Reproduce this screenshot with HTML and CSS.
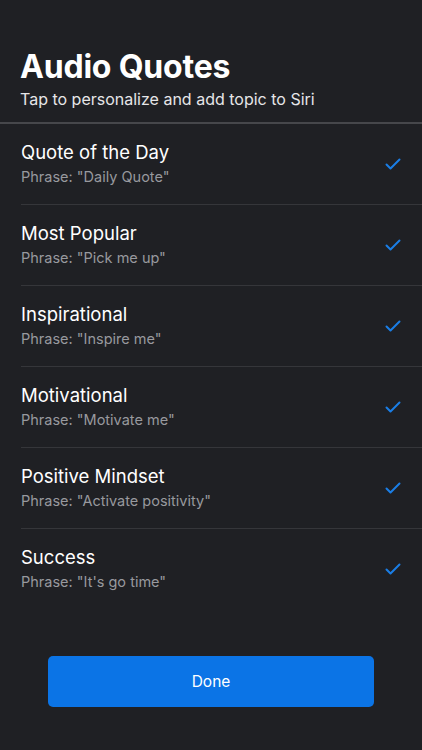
FILE: index.html
```html
<!DOCTYPE html>
<html lang="en">
<head>
    <meta charset="UTF-8">
    <meta name="viewport" content="width=device-width, initial-scale=1.0">
    <title>Audio Quotes</title>
    <link rel="stylesheet" href="styles.css">
</head>
<body>

<div class="screen">
    <div class="header">
        <h1>Audio Quotes</h1>
        <p>Tap to personalize and add topic to Siri</p>
    </div>

    <div class="list">
        <div class="row">
            <div class="text">
                <div class="name">Quote of the Day</div>
                <div class="phrase">Phrase: "Daily Quote"</div>
            </div>
            <svg class="check" width="16" height="12" viewBox="0 0 16 12"><path d="M1.5 6.5 L5.5 10.5 L14.5 1.5" fill="none" stroke="#1a7ee6" stroke-width="2" stroke-linecap="round" stroke-linejoin="round"/></svg>
        </div>
        <div class="row">
            <div class="text">
                <div class="name">Most Popular</div>
                <div class="phrase">Phrase: "Pick me up"</div>
            </div>
            <svg class="check" width="16" height="12" viewBox="0 0 16 12"><path d="M1.5 6.5 L5.5 10.5 L14.5 1.5" fill="none" stroke="#1a7ee6" stroke-width="2" stroke-linecap="round" stroke-linejoin="round"/></svg>
        </div>
        <div class="row">
            <div class="text">
                <div class="name">Inspirational</div>
                <div class="phrase">Phrase: "Inspire me"</div>
            </div>
            <svg class="check" width="16" height="12" viewBox="0 0 16 12"><path d="M1.5 6.5 L5.5 10.5 L14.5 1.5" fill="none" stroke="#1a7ee6" stroke-width="2" stroke-linecap="round" stroke-linejoin="round"/></svg>
        </div>
        <div class="row">
            <div class="text">
                <div class="name">Motivational</div>
                <div class="phrase">Phrase: "Motivate me"</div>
            </div>
            <svg class="check" width="16" height="12" viewBox="0 0 16 12"><path d="M1.5 6.5 L5.5 10.5 L14.5 1.5" fill="none" stroke="#1a7ee6" stroke-width="2" stroke-linecap="round" stroke-linejoin="round"/></svg>
        </div>
        <div class="row">
            <div class="text">
                <div class="name">Positive Mindset</div>
                <div class="phrase">Phrase: "Activate positivity"</div>
            </div>
            <svg class="check" width="16" height="12" viewBox="0 0 16 12"><path d="M1.5 6.5 L5.5 10.5 L14.5 1.5" fill="none" stroke="#1a7ee6" stroke-width="2" stroke-linecap="round" stroke-linejoin="round"/></svg>
        </div>
        <div class="row last">
            <div class="text">
                <div class="name">Success</div>
                <div class="phrase">Phrase: "It's go time"</div>
            </div>
            <svg class="check" width="16" height="12" viewBox="0 0 16 12"><path d="M1.5 6.5 L5.5 10.5 L14.5 1.5" fill="none" stroke="#1a7ee6" stroke-width="2" stroke-linecap="round" stroke-linejoin="round"/></svg>
        </div>
    </div>

    <div class="footer">
        <button class="done-btn">Done</button>
    </div>
</div>

</body>
</html>
```

FILE: styles.css
```css
body {
    font-family: "Inter", "Liberation Sans", Arial, sans-serif;
    background-color: #1f2024;
    color: #ffffff;
    margin: 0;
    padding: 0;
}
.screen {
    width: 422px;
    height: 750px;
    display: flex;
    flex-direction: column;
}
.header {
    padding: 48px 20px 12px 20px;
    border-bottom: 2px solid #46474b;
}
.header h1 {
    margin: 0;
    font-size: 32px;
    font-weight: 700;
    line-height: 38px;
    letter-spacing: -0.2px;
}
.header p {
    margin: 2px 0 0 0;
    font-size: 16px;
    line-height: 22px;
    color: #e6e6e8;
}
.list {
    padding-left: 21px;
}
.row {
    height: 80px;
    display: flex;
    align-items: center;
    justify-content: space-between;
    border-bottom: 1px solid #35363a;
    padding-right: 21px;
}
.row.last {
    border-bottom: none;
}
.text {
    margin-top: -3px;
}
.name {
    font-size: 18.5px;
    line-height: 26px;
    color: #ffffff;
}
.phrase {
    margin-top: 2px;
    font-size: 14.5px;
    line-height: 20px;
    color: #98999e;
}
.check {
    display: block;
}
.footer {
    display: flex;
    justify-content: center;
    padding-top: 47px;
}
.done-btn {
    width: 326px;
    height: 51px;
    background-color: #0b74e6;
    color: white;
    border: none;
    border-radius: 5px;
    font-family: inherit;
    font-size: 15.5px;
    cursor: pointer;
}
```
